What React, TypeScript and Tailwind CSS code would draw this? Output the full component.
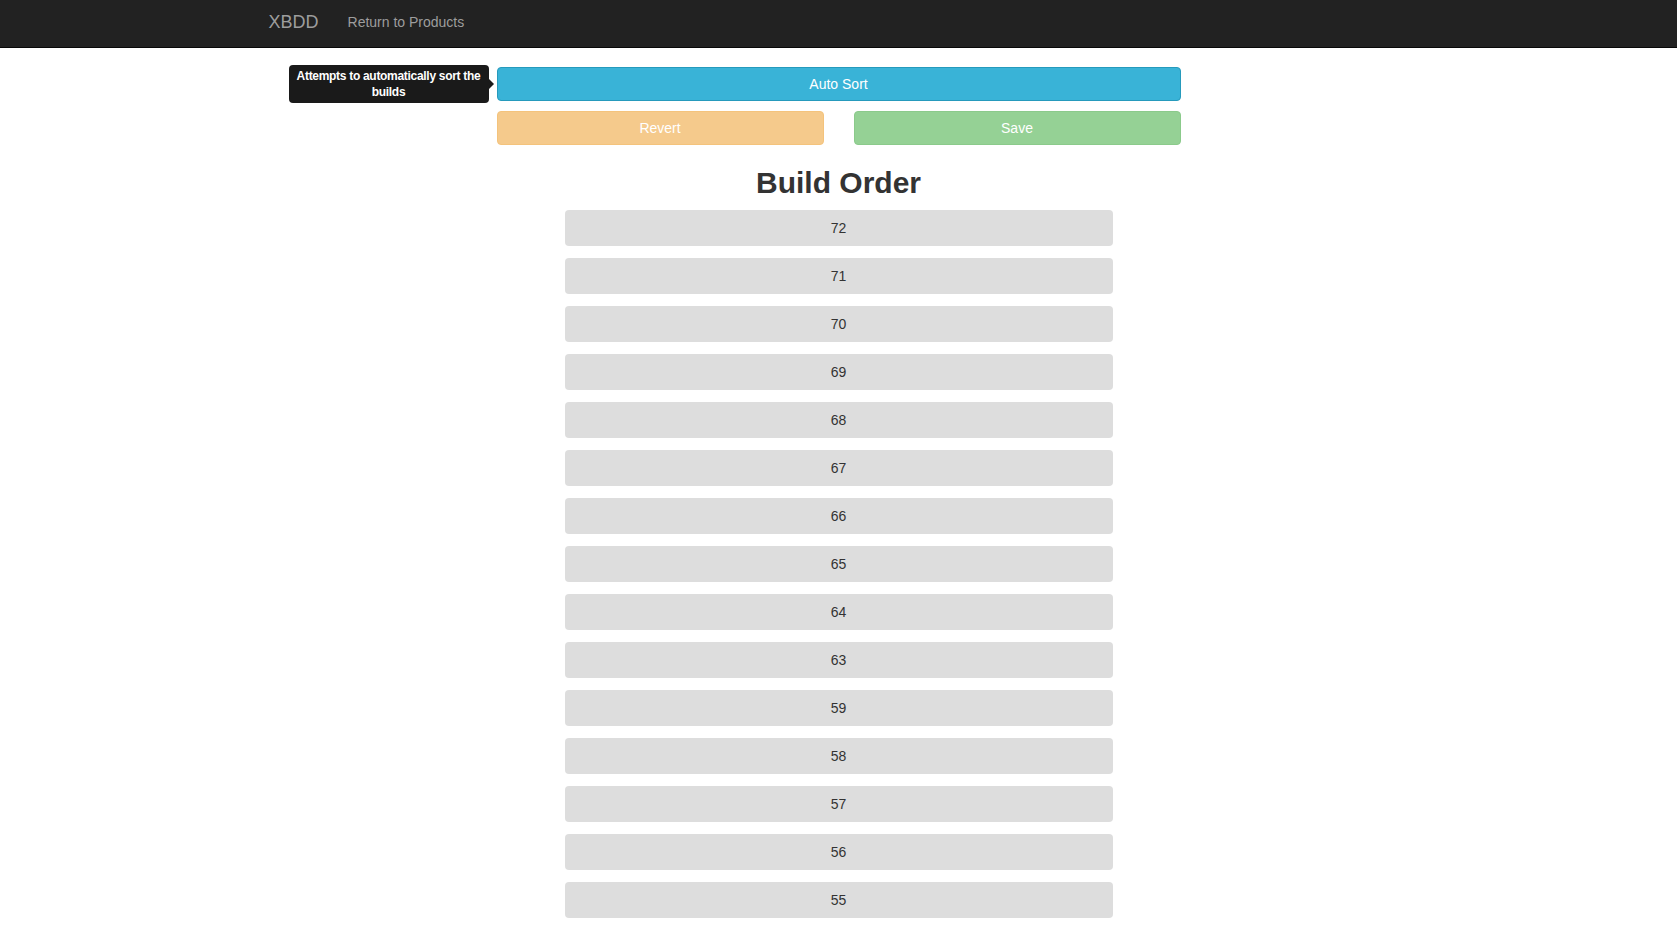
const builds = [72, 71, 70, 69, 68, 67, 66, 65, 64, 63, 59, 58, 57, 56, 55];

const NavBar = () => {
  return (
    <div className="h-[48px] bg-[#222222] border-b border-[#080808]">
      <div className="mx-auto w-[1170px] px-[15px] pb-[4px] flex items-center h-full">
        <span className="text-[18px] text-[#9d9d9d] leading-[20px] pr-[29px]">XBDD</span>
        <span className="text-[14px] text-[#9d9d9d] leading-[20px]">Return to Products</span>
      </div>
    </div>
  );
};

const Tooltip = () => {
  return (
    <div className="absolute right-full top-[-2px] mr-[3px] flex items-center">
      <div className="w-[200px] rounded-[4px] bg-[#1a1a1a] px-[8px] py-[3px] text-center text-[12px] font-bold leading-4 tracking-[-0.3px] text-white whitespace-nowrap">
        Attempts to automatically sort the
        <br />
        builds
      </div>
      <div className="w-0 h-0 border-y-[5px] border-y-transparent border-l-[5px] border-l-[#1a1a1a]" />
    </div>
  );
};

export default function App() {
  return (
    <div className="min-h-screen bg-white font-['Liberation_Sans',Arial,sans-serif] text-[#333333]">
      <NavBar />
      <div className="mx-auto w-[684px] pt-[19px]">
        <div className="relative">
          <Tooltip />
          <button className="w-full h-[34px] rounded-[4px] border border-[#269abc] bg-[#39b3d7] text-[14px] text-white">
            Auto Sort
          </button>
        </div>
        <div className="mt-[10px] grid grid-cols-2 gap-[30px]">
          <button className="h-[34px] rounded-[4px] border border-[#f4c37c] bg-[#f5ca8c] text-[14px] text-white">
            Revert
          </button>
          <button className="h-[34px] rounded-[4px] border border-[#8bca8b] bg-[#95d195] text-[14px] text-white">
            Save
          </button>
        </div>
      </div>
      <h2 className="mt-[21px] mb-[11px] text-center text-[30px] font-bold leading-[33px] text-[#333333]">
        Build Order
      </h2>
      <div className="mx-auto w-[548px] flex flex-col gap-[12px]">
        {builds.map((b) => (
          <div
            key={b}
            className="h-[36px] rounded-[4px] bg-[#dddddd] flex items-center justify-center text-[14px] text-[#333333]"
          >
            {b}
          </div>
        ))}
      </div>
    </div>
  );
}
